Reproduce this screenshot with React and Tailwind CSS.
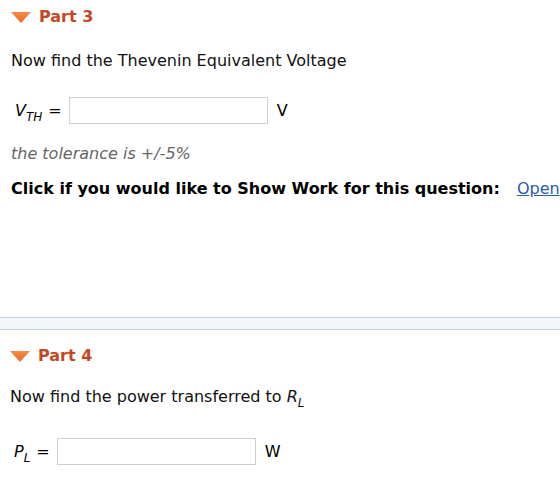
const Triangle = () => (
  <svg width="20" height="11" viewBox="0 0 20 11" className="shrink-0">
    <defs>
      <linearGradient id="tri" x1="0" y1="0" x2="0" y2="1">
        <stop offset="0" stopColor="#f58a4a" />
        <stop offset="1" stopColor="#ef6a26" />
      </linearGradient>
    </defs>
    <polygon points="0,0 20,0 10,11" fill="url(#tri)" />
  </svg>
);

const PartHeader = ({ label }) => (
  <div className="flex items-center gap-[8px] h-[16px]">
    <Triangle />
    <span className="text-[16px] font-bold text-[#c4481f] leading-none">{label}</span>
  </div>
);

const Sub = ({ children }) => (
  <span className="italic text-[12px] leading-none relative top-[5px]">{children}</span>
);

const AnswerRow = ({ symbol, sub, unit, boxWidth }) => (
  <div className="flex items-center h-[27px]">
    <span className="text-[16px] text-black whitespace-nowrap leading-none">
      <i>{symbol}</i>
      <Sub>{sub}</Sub>
      <span className="ml-[6px]">=</span>
    </span>
    <div className={`${boxWidth} h-[27px] border border-[#cfcfcf] bg-white ml-[7px]`} />
    <span className="text-[16px] text-black ml-[9px] leading-none">{unit}</span>
  </div>
);

export default function App() {
  return (
    <div className="w-[560px] h-[485px] bg-white overflow-hidden font-['DejaVu_Sans',Verdana,sans-serif] text-[16px] text-[#111]">
      <div className="pl-[11px] pt-[9px]">
        <PartHeader label="Part 3" />
        <p className="mt-[27px] leading-[18px]">Now find the Thevenin Equivalent Voltage</p>
        <div className="mt-[27px] pl-[4px]">
          <AnswerRow symbol="V" sub="TH" unit="V" boxWidth="w-[199px]" />
        </div>
        <p className="mt-[21px] italic text-[#666] leading-[18px]">the tolerance is +/-5%</p>
        <div className="mt-[17px] flex items-center whitespace-nowrap h-[18px]">
          <span className="font-bold text-black">Click if you would like to Show Work for this question:</span>
          <a href="#" className="ml-[17px] text-[#2a5d9f] underline">Open</a>
        </div>
      </div>

      <div className="mt-[119px] h-[13px] bg-[#f3f7fa] border-y border-[#c9d3da]" />

      <div className="pl-[10px] pt-[18px]">
        <PartHeader label="Part 4" />
        <p className="mt-[24px] h-[18px] leading-[18px] whitespace-nowrap">
          Now find the power transferred to <i>R</i>
          <Sub>L</Sub>
        </p>
        <div className="mt-[32px] pl-[4px]">
          <AnswerRow symbol="P" sub="L" unit="W" boxWidth="w-[199px]" />
        </div>
      </div>
    </div>
  );
}
